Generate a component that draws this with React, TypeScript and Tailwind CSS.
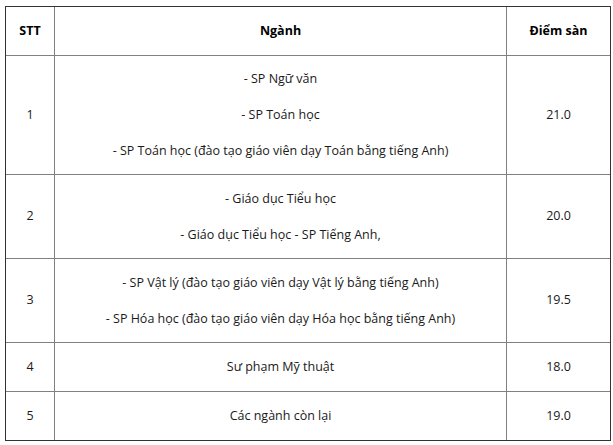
const rows = [
  {
    stt: "1",
    nganh: [
      "- SP Ngữ văn",
      "- SP Toán học",
      "- SP Toán học (đào tạo giáo viên dạy Toán bằng tiếng Anh)",
    ],
    diem: "21.0",
    h: "h-[119px]",
  },
  {
    stt: "2",
    nganh: ["- Giáo dục Tiểu học", "- Giáo dục Tiểu học - SP Tiếng Anh,"],
    diem: "20.0",
    h: "h-[84px]",
  },
  {
    stt: "3",
    nganh: [
      "- SP Vật lý (đào tạo giáo viên dạy Vật lý bằng tiếng Anh)",
      "- SP Hóa học (đào tạo giáo viên dạy Hóa học bằng tiếng Anh)",
    ],
    diem: "19.5",
    h: "h-[84px]",
  },
  { stt: "4", nganh: ["Sư phạm Mỹ thuật"], diem: "18.0", h: "h-[49px]" },
  { stt: "5", nganh: ["Các ngành còn lại"], diem: "19.0", h: "h-[49px]" },
]

export default function App() {
  return (
    <div className="min-h-screen bg-white pl-[5px] pt-[6px] font-['Open_Sans',sans-serif] text-[12.5px] text-[#1a1a1a]">
      <div className="w-[606px] border border-[#333]">
        <div className="flex h-[48px] font-bold text-black">
          <div className="flex w-[49px] items-center justify-center border-r border-[#808080]">
            STT
          </div>
          <div className="flex w-[452px] items-center justify-center border-r border-[#808080]">
            Ngành
          </div>
          <div className="flex flex-1 items-center justify-center">Điểm sàn</div>
        </div>
        {rows.map((row) => (
          <div key={row.stt} className={`flex border-t border-[#808080] ${row.h}`}>
            <div className="flex w-[49px] items-center justify-center border-r border-[#808080]">
              {row.stt}
            </div>
            <div className="flex w-[452px] flex-col items-center justify-center gap-[18px] border-r border-[#808080] leading-[18px]">
              {row.nganh.map((line) => (
                <p key={line}>{line}</p>
              ))}
            </div>
            <div className="flex flex-1 items-center justify-center">{row.diem}</div>
          </div>
        ))}
      </div>
    </div>
  )
}
